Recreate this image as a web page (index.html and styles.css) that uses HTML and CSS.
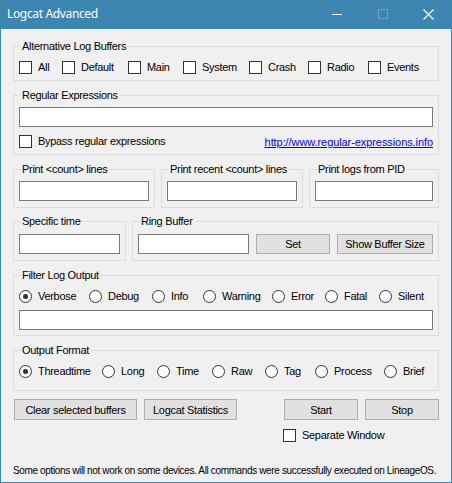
FILE: index.html
```html
<!DOCTYPE html>
<html>
<head>
<meta charset="utf-8">
<link rel="stylesheet" href="styles.css">
</head>
<body>
<div class="window">
  <div class="titlebar">
    <span class="title">Logcat Advanced</span>
    <div class="caption">
      <svg class="cbtn" width="46" height="29" viewBox="0 0 46 29"><path d="M18 14.5h10" stroke="#fff" stroke-width="1"/></svg>
      <svg class="cbtn" width="46" height="29" viewBox="0 0 46 29"><rect x="18.5" y="9.5" width="9" height="9" fill="none" stroke="#6fa3c6" stroke-width="1"/></svg>
      <svg class="cbtn" width="46" height="29" viewBox="0 0 46 29"><path d="M17.5 9.5l10 10M27.5 9.5l-10 10" stroke="#fff" stroke-width="1.1"/></svg>
    </div>
  </div>
  <div class="client">
    <fieldset class="group g1">
      <legend>Alternative Log Buffers</legend>
      <div class="opts opts-buf">
        <label class="chk"><input type="checkbox"><span>All</span></label>
        <label class="chk"><input type="checkbox"><span>Default</span></label>
        <label class="chk"><input type="checkbox"><span>Main</span></label>
        <label class="chk"><input type="checkbox"><span>System</span></label>
        <label class="chk"><input type="checkbox"><span>Crash</span></label>
        <label class="chk"><input type="checkbox"><span>Radio</span></label>
        <label class="chk"><input type="checkbox"><span>Events</span></label>
      </div>
    </fieldset>

    <fieldset class="group g2">
      <legend>Regular Expressions</legend>
      <input type="text" class="tb tb-regex">
      <div class="regex-row">
        <label class="chk"><input type="checkbox"><span>Bypass regular expressions</span></label>
        <a class="link" href="#">http://www.regular-expressions.info</a>
      </div>
    </fieldset>

    <div class="row3">
      <fieldset class="group g3">
        <legend>Print &lt;count&gt; lines</legend>
        <input type="text" class="tb">
      </fieldset>
      <fieldset class="group g3">
        <legend>Print recent &lt;count&gt; lines</legend>
        <input type="text" class="tb">
      </fieldset>
      <fieldset class="group g3">
        <legend>Print logs from PID</legend>
        <input type="text" class="tb">
      </fieldset>
    </div>

    <div class="row4">
      <fieldset class="group g4">
        <legend>Specific time</legend>
        <input type="text" class="tb">
      </fieldset>
      <fieldset class="group g4">
        <legend>Ring Buffer</legend>
        <div class="ring">
          <input type="text" class="tb">
          <button class="btn">Set</button>
          <button class="btn">Show Buffer Size</button>
        </div>
      </fieldset>
    </div>

    <fieldset class="group g5">
      <legend>Filter Log Output</legend>
      <div class="opts opts-filter">
        <label class="chk"><input type="radio" name="lvl" checked><span>Verbose</span></label>
        <label class="chk"><input type="radio" name="lvl"><span>Debug</span></label>
        <label class="chk"><input type="radio" name="lvl"><span>Info</span></label>
        <label class="chk"><input type="radio" name="lvl"><span>Warning</span></label>
        <label class="chk"><input type="radio" name="lvl"><span>Error</span></label>
        <label class="chk"><input type="radio" name="lvl"><span>Fatal</span></label>
        <label class="chk"><input type="radio" name="lvl"><span>Silent</span></label>
      </div>
      <input type="text" class="tb tb-filter">
    </fieldset>

    <fieldset class="group g6">
      <legend>Output Format</legend>
      <div class="opts opts-format">
        <label class="chk"><input type="radio" name="fmt" checked><span>Threadtime</span></label>
        <label class="chk"><input type="radio" name="fmt"><span>Long</span></label>
        <label class="chk"><input type="radio" name="fmt"><span>Time</span></label>
        <label class="chk"><input type="radio" name="fmt"><span>Raw</span></label>
        <label class="chk"><input type="radio" name="fmt"><span>Tag</span></label>
        <label class="chk"><input type="radio" name="fmt"><span>Process</span></label>
        <label class="chk"><input type="radio" name="fmt"><span>Brief</span></label>
      </div>
    </fieldset>

    <div class="actions">
      <button class="btn b-clear">Clear selected buffers</button>
      <button class="btn b-stats">Logcat Statistics</button>
      <button class="btn b-start">Start</button>
      <button class="btn b-stop">Stop</button>
    </div>
    <div class="sep">
      <label class="chk"><input type="checkbox"><span>Separate Window</span></label>
    </div>
    <p class="footer">Some options will not work on some devices. All commands were successfully executed on LineageOS.</p>
  </div>
</div>
</body>
</html>
```

FILE: styles.css
```css
* { box-sizing: border-box; }

body {
  margin: 0;
  background: #ffffff;
  font-family: "Liberation Sans", Arial, sans-serif;
  font-size: 11px;
  letter-spacing: -0.3px;
  color: #000;
}

.window {
  width: 452px;
  height: 483px;
  background: #f0f0f0;
  border: 1px solid #3c86b1;
  border-top: 0;
  display: flex;
  flex-direction: column;
}

.titlebar {
  height: 29px;
  margin: 0 -1px;
  background: #3c86b1;
  display: flex;
  align-items: center;
  color: #fff;
  flex: none;
}

.title {
  font-family: "Noto Sans", "Open Sans", sans-serif;
  font-size: 12px;
  letter-spacing: -0.35px;
  padding-left: 7px;
  flex: 1;
  position: relative;
  top: -1px;
}

.caption { display: flex; }
.cbtn { display: block; }

.client {
  flex: 1;
  padding: 11px 12px 0;
  display: flex;
  flex-direction: column;
}

.group {
  margin: 0;
  padding: 0 5px 6px;
  border: 1px solid #dcdcdc;
  min-width: 0;
}

.group legend {
  margin-left: 2px;
  padding: 0 1px;
  line-height: 13px;
  font-size: 11px;
}

.opts {
  display: grid;
  height: 13px;
}

.opts-buf { margin-top: 8px; grid-template-columns: 43px 66px 55px 66px 59px 60px auto; }
.opts-filter { margin-top: 8px; grid-template-columns: 70px 63px 51px 69px 53px 54px auto; }
.opts-format { margin-top: 8px; grid-template-columns: 83px 55px 55px 53px 50px 69px auto; }

.chk {
  display: flex;
  align-items: center;
  height: 13px;
  line-height: 13px;
  white-space: nowrap;
}

.chk input {
  appearance: none;
  -webkit-appearance: none;
  margin: 0 6px 0 0;
  width: 13px;
  height: 13px;
  border: 1px solid #333;
  background: #fff;
  flex: none;
}

.chk input[type="radio"] {
  border-radius: 50%;
  display: grid;
  place-items: center;
}

.chk input[type="radio"]:checked::before {
  content: "";
  width: 5px;
  height: 5px;
  border-radius: 50%;
  background: #333;
}

.tb {
  display: block;
  width: 100%;
  height: 20px;
  margin: 0;
  padding: 0 3px;
  border: 1px solid #7a7a7a;
  background: #fff;
  font: inherit;
}

.g1 { margin-bottom: 8px; }

.g2 { margin-bottom: 8px; }
.g2 .tb-regex { margin-top: 5px; }
.regex-row {
  margin-top: 8px;
  display: flex;
  justify-content: space-between;
  align-items: center;
  height: 13px;
}
.link {
  color: #0000ff;
  text-decoration: underline;
  line-height: 13px;
  letter-spacing: -0.08px;
  position: relative;
  top: 1px;
}

.row3 {
  display: grid;
  grid-template-columns: 142px 142px 1fr;
  column-gap: 6px;
  margin-bottom: 7px;
}
.g3 .tb { margin-top: 5px; }

.row4 {
  display: grid;
  grid-template-columns: 113px 1fr;
  column-gap: 6px;
  margin-bottom: 8px;
}
.g4 .tb { margin-top: 6px; }

.ring {
  margin-top: 6px;
  display: grid;
  grid-template-columns: 111px 74px 96px;
  column-gap: 7px;
}
.ring .tb { margin-top: 0; }

.btn {
  height: 20px;
  margin: 0;
  padding: 0;
  border: 1px solid #adadad;
  background: #e1e1e1;
  font: inherit;
  letter-spacing: inherit;
  color: #000;
  text-align: center;
  white-space: nowrap;
}

.g5 { margin-bottom: 8px; padding-bottom: 5px; }
.g5 .tb-filter { margin-top: 7px; }

.g6 { padding-bottom: 12px; }

.actions {
  margin-top: 8px;
  padding-left: 1px;
  display: flex;
  gap: 7px;
}
.actions .btn { height: 21px; }
.b-clear { width: 123px; }
.b-stats { width: 93px; }
.b-start { width: 74px; margin-left: 40px; }
.b-stop { width: 74px; }

.sep {
  margin-top: 9px;
  padding-left: 270px;
}

.footer {
  margin: 23px 0 0;
  font-size: 10px;
  letter-spacing: -0.36px;
  line-height: 12px;
  white-space: nowrap;
}
```
